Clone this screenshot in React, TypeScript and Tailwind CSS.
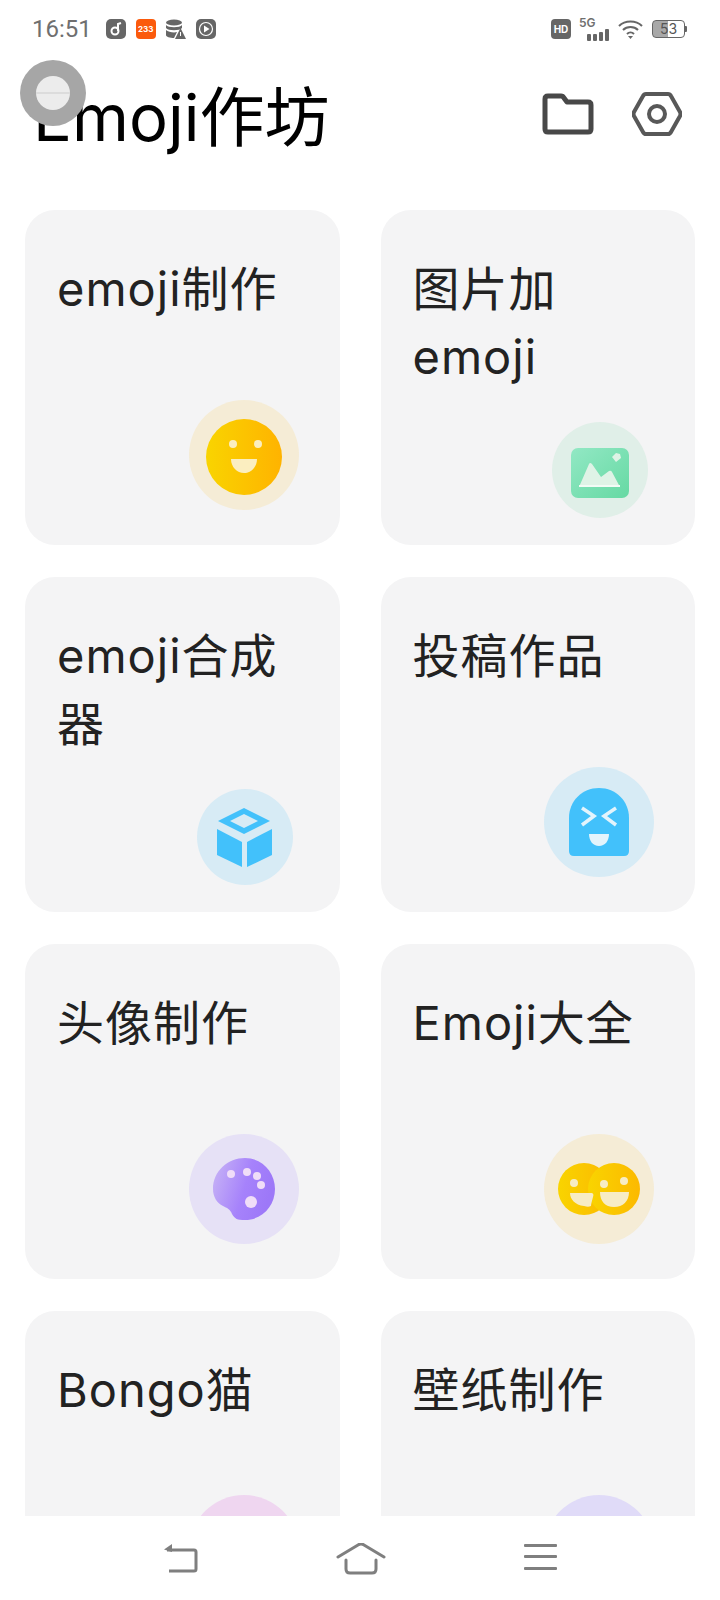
const FONT = '[font-family:Inter,"Noto_Sans_CJK_SC",sans-serif]';

const Smile = () => (
  <svg className="mt-[4px]" width="78" height="78" viewBox="0 0 78 78">
    <defs>
      <linearGradient id="yellow1" x1="0" y1="0" x2="1" y2="0">
        <stop offset="0" stopColor="#f9d400" />
        <stop offset="1" stopColor="#ffb300" />
      </linearGradient>
    </defs>
    <circle cx="39" cy="39" r="38" fill="url(#yellow1)" />
    <circle cx="28" cy="26" r="4" fill="#fbeec0" />
    <circle cx="53" cy="26" r="4" fill="#fbeec0" />
    <path d="M26 41h26c0 8-6 14-13 14s-13-6-13-14z" fill="#fbeec0" />
  </svg>
);

const Picture = () => (
  <svg className="mt-[5px]" width="58" height="50" viewBox="0 0 58 50">
    <defs>
      <linearGradient id="green1" x1="0" y1="0" x2="1" y2="1">
        <stop offset="0" stopColor="#92e8c4" />
        <stop offset="1" stopColor="#66d9a3" />
      </linearGradient>
    </defs>
    <rect width="58" height="50" rx="7" fill="url(#green1)" />
    <path d="M8 39 L18 16 Q19 14 21 16 L30 29 L38 23 Q40 22 41 24 L49 39z" fill="#dff3e6" />
    <rect x="8" y="37" width="41" height="2" fill="#f2fbf5" />
    <path d="M41 9l4-4 4 1 1 4-5 4z" fill="#dff3e6" />
  </svg>
);

const Cube = () => (
  <svg width="56" height="60" viewBox="0 0 56 60">
    <path d="M27 1 L53 14 L27 27 L1 14z M27 7 L13 14 L27 21 L41 14z" fill="#42c1fb" fillRule="evenodd" />
    <path d="M0 22 L25 35 V60 L0 48z" fill="#42c1fb" />
    <path d="M55 22 L30 35 V60 L55 48z" fill="#42c1fb" />
  </svg>
);

const Ghost = () => (
  <svg width="60" height="68" viewBox="0 0 60 68">
    <path d="M0 30C0 13 13 0 30 0s30 13 30 30v33q0 5-5 5H5q-5 0-5-5z" fill="#42c1fb" />
    <path d="M13 20 L25 28 L13 37" fill="none" stroke="#e3f4fc" strokeWidth="3.5" />
    <path d="M47 20 L35 28 L47 37" fill="none" stroke="#e3f4fc" strokeWidth="3.5" />
    <path d="M20 46h20c0 7-4 12-10 12s-10-5-10-12z" fill="#e3f4fc" />
  </svg>
);

const Palette = () => (
  <svg width="62" height="62" viewBox="0 0 62 62">
    <defs>
      <linearGradient id="purple1" x1="0" y1="0" x2="1" y2="0.3">
        <stop offset="0" stopColor="#c9b6f5" />
        <stop offset="0.6" stopColor="#a682fb" />
        <stop offset="1" stopColor="#9d78f8" />
      </linearGradient>
    </defs>
    <path d="M32 0C49 0 62 14 62 31S49 62 32 62c-8 0-10-1-13-6-2-5-5-6-9-8C4 45 0 39 0 31 0 13 15 0 32 0z" fill="url(#purple1)" />
    <circle cx="18" cy="16" r="4" fill="#f0ddf8" />
    <circle cx="34" cy="14" r="4" fill="#f0ddf8" />
    <circle cx="44" cy="18" r="4" fill="#f0ddf8" />
    <circle cx="48" cy="27" r="4" fill="#f0ddf8" />
    <circle cx="38" cy="44" r="6" fill="#f0ddf8" />
  </svg>
);

const TwoSmiles = () => (
  <svg width="82" height="52" viewBox="0 0 82 52">
    <defs>
      <linearGradient id="yellow2" x1="0" y1="0" x2="1" y2="0">
        <stop offset="0" stopColor="#f9d400" />
        <stop offset="1" stopColor="#fcb900" />
      </linearGradient>
    </defs>
    <circle cx="26" cy="26" r="26" fill="url(#yellow2)" />
    <circle cx="56" cy="26" r="26" fill="url(#yellow2)" />
    <circle cx="16" cy="20" r="4" fill="#f7ecc4" />
    <path d="M12 30h21c2 0 3 1 2 4-1 4-2 7-2 9-2 1-4 1-7 0-9-1-14-7-14-13z" fill="#f7ecc4" />
    <circle cx="46" cy="21" r="4" fill="#f7ecc4" />
    <circle cx="66" cy="18" r="4" fill="#f7ecc4" />
    <path d="M42 29h29c0 9-6 15-15 15s-14-6-14-15z" fill="#f7ecc4" />
  </svg>
);

const BIG = "h-[110px] w-[110px] mr-[9px] mb-[35px]";
const SMALL = "h-[96px] w-[96px] mr-[15px] mb-[27px]";
const BIG_LOW = "h-[110px] w-[110px] mr-[9px] mb-[41px]";

const cards = [
  { title: "emoji制作", size: BIG, ring: "bg-[#f5ecd6]", icon: <Smile /> },
  { title: "图片加emoji", size: SMALL, ring: "bg-[#e0efe8]", icon: <Picture /> },
  { title: "emoji合成器", size: SMALL, ring: "bg-[#d7ebf5]", icon: <Cube /> },
  { title: "投稿作品", size: BIG, ring: "bg-[#d7ebf5]", icon: <Ghost /> },
  { title: "头像制作", size: BIG, ring: "bg-[#e6e1f6]", icon: <Palette /> },
  { title: "Emoji大全", size: BIG, ring: "bg-[#f5ecd6]", icon: <TwoSmiles /> },
  { title: "Bongo猫", size: BIG_LOW, ring: "bg-[#efd6f0]", icon: null },
  { title: "壁纸制作", size: BIG_LOW, ring: "bg-[#e0dbf8]", icon: null },
];

const Card = ({ title, size, ring, icon }: (typeof cards)[number]) => (
  <div className="flex h-[335px] flex-col rounded-[30px] bg-[#f4f4f5] pt-[45px] pr-[32px] pl-[32px]">
    <div className="text-[47px] leading-[68px] tracking-[1px] text-[#222222]">{title}</div>
    <div className={`mt-auto flex shrink-0 items-center justify-center self-end rounded-full ${ring} ${size}`}>{icon}</div>
  </div>
);

const StatusBar = () => (
  <div className="flex h-[58px] items-center pr-[33px] pl-[32px] text-[#6f6f6f]">
    <span className="font-['Roboto'] text-[24px] leading-none">16:51</span>
    <div className="ml-[14px] flex items-center gap-[10px]">
      <svg width="20" height="20" viewBox="0 0 20 20">
        <rect width="20" height="20" rx="5" fill="#666" />
        <circle cx="9" cy="12" r="3.5" fill="none" stroke="#fff" strokeWidth="2" />
        <path d="M12 12V5l3-1" fill="none" stroke="#fff" strokeWidth="2" />
      </svg>
      <div className="flex h-[20px] w-[20px] items-center justify-center rounded-[4px] bg-[#fb5a0c] text-[8px] font-bold text-white">233</div>
      <svg width="20" height="20" viewBox="0 0 20 20">
        <ellipse cx="8" cy="3.500" rx="8" ry="3" fill="#666" />
        <path d="M0 6c2 3 14 3 16 0v3c-2 3-14 3-16 0zM0 11c2 2 8 3 11 2l-3 6c-4 0-8-1-8-3z" fill="#666" />
        <path d="M14.500 9 L20 20H9z" fill="#666" />
        <rect x="14" y="13" width="1" height="4" fill="#fff" />
      </svg>
      <svg width="20" height="20" viewBox="0 0 20 20">
        <rect width="20" height="20" rx="5" fill="#666" />
        <circle cx="10" cy="10" r="6.500" fill="none" stroke="#fff" strokeWidth="1.200" />
        <path d="M8 6.500v7l5.500-3.500z" fill="#fff" />
      </svg>
    </div>
    <div className="ml-auto flex items-center">
      <div className="flex h-[20px] w-[20px] items-center justify-center rounded-[4px] bg-[#666] text-[10px] font-bold text-white">HD</div>
      <div className="ml-[8px] flex h-[24px] w-[32px] flex-col">
        <span className="text-[12px] leading-[12px] font-semibold">5G</span>
        <svg width="32" height="12" viewBox="0 0 32 12">
          <rect x="8" y="5" width="4" height="7" rx="1" fill="#666" />
          <rect x="14" y="5" width="4" height="7" rx="1" fill="#666" />
          <rect x="20" y="3" width="4" height="9" rx="1" fill="#666" />
          <rect x="26" y="0" width="4" height="12" rx="1" fill="#666" />
        </svg>
      </div>
      <svg className="ml-[7px]" width="25" height="19" viewBox="0 0 25 19" fill="none" stroke="#666" strokeWidth="2">
        <path d="M1 6c6-6 17-6 23 0" />
        <path d="M5 10c4-4 11-4 15 0" />
        <path d="M9 14c2-2 5-2 7 0" />
        <path d="M12.500 19l-2.500-3h5z" fill="#666" stroke="none" />
      </svg>
      <div className="ml-[9px] flex h-[18px] w-[33px] items-center justify-center overflow-hidden rounded-[4px] border border-[#666] bg-[linear-gradient(90deg,#a8a8a8_50%,#ffffff_50%)] text-[14px] leading-none text-[#555]">53</div>
      <div className="h-[6px] w-[2px] rounded-r-[1px] bg-[#666]" />
    </div>
  </div>
);

const Header = () => (
  <div className="flex h-[152px] items-start pt-[17px] pr-[38px] pl-[33px]">
    <h1 className="text-[65px] leading-[86px] font-normal text-black">Emoji作坊</h1>
    <div className="mt-[16px] ml-auto flex items-center gap-[38px]">
      <svg width="52" height="42" viewBox="0 0 52 42" fill="none" stroke="#484848" strokeWidth="5" strokeLinejoin="round">
        <path d="M3 6q0-3 3-3h13q2 0 3 2l3 4h21q3 0 3 3v24q0 3-3 3H6q-3 0-3-3z" />
      </svg>
      <svg width="50" height="46" viewBox="0 0 50 46" fill="none" stroke="#585858" strokeWidth="4">
        <path d="M14 3h22q2 0 3 2l9 16q1 2 0 4l-9 16q-1 2-3 2H14q-2 0-3-2L2 25q-1-2 0-4l9-16q1-2 3-2z" />
        <circle cx="25" cy="23" r="8" />
      </svg>
    </div>
  </div>
);

const NavBar = () => (
  <div className="flex h-[84px] items-start justify-center gap-[138px] bg-white pt-[27px]">
    <svg width="36" height="30" viewBox="0 0 36 30" fill="none" stroke="#7f7f7f" strokeWidth="3">
      <path d="M5 7h27q2 0 2 2v17q0 2-2 2H7" />
      <path d="M10 1v8L2 6.500z" fill="#7f7f7f" stroke="none" />
    </svg>
    <svg width="50" height="32" viewBox="0 0 50 32" fill="none" stroke="#7f7f7f" strokeWidth="3" strokeLinecap="round">
      <path d="M2 14L22 2q3-2 6 0l20 12" />
      <path d="M10 17v9q0 4 4 4h22q4 0 4-4v-9" />
    </svg>
    <svg width="34" height="28" viewBox="0 0 34 28" fill="#7f7f7f">
      <rect y="1" width="33" height="3" rx="1" />
      <rect y="12" width="33" height="3" rx="1" />
      <rect y="24" width="33" height="3" rx="1" />
    </svg>
  </div>
);

export default function App() {
  return (
    <div className={`relative flex h-[1600px] w-[720px] flex-col overflow-hidden bg-white ${FONT}`}>
      <StatusBar />
      <Header />
      <div className="min-h-0 flex-1 overflow-hidden">
        <div className="grid grid-cols-2 gap-x-[41px] gap-y-[32px] px-[25px]">
          {cards.map((c) => (
            <Card key={c.title} {...c} />
          ))}
        </div>
      </div>
      <NavBar />
      <div className="absolute top-[60px] left-[20px] flex h-[66px] w-[66px] items-center justify-center rounded-full bg-[#a6a6a6]">
        <div className="flex h-[34px] w-[34px] items-center rounded-full bg-[#ececec]">
          <div className="h-[2px] w-full bg-[#dcdcdc]" />
        </div>
      </div>
    </div>
  );
}
